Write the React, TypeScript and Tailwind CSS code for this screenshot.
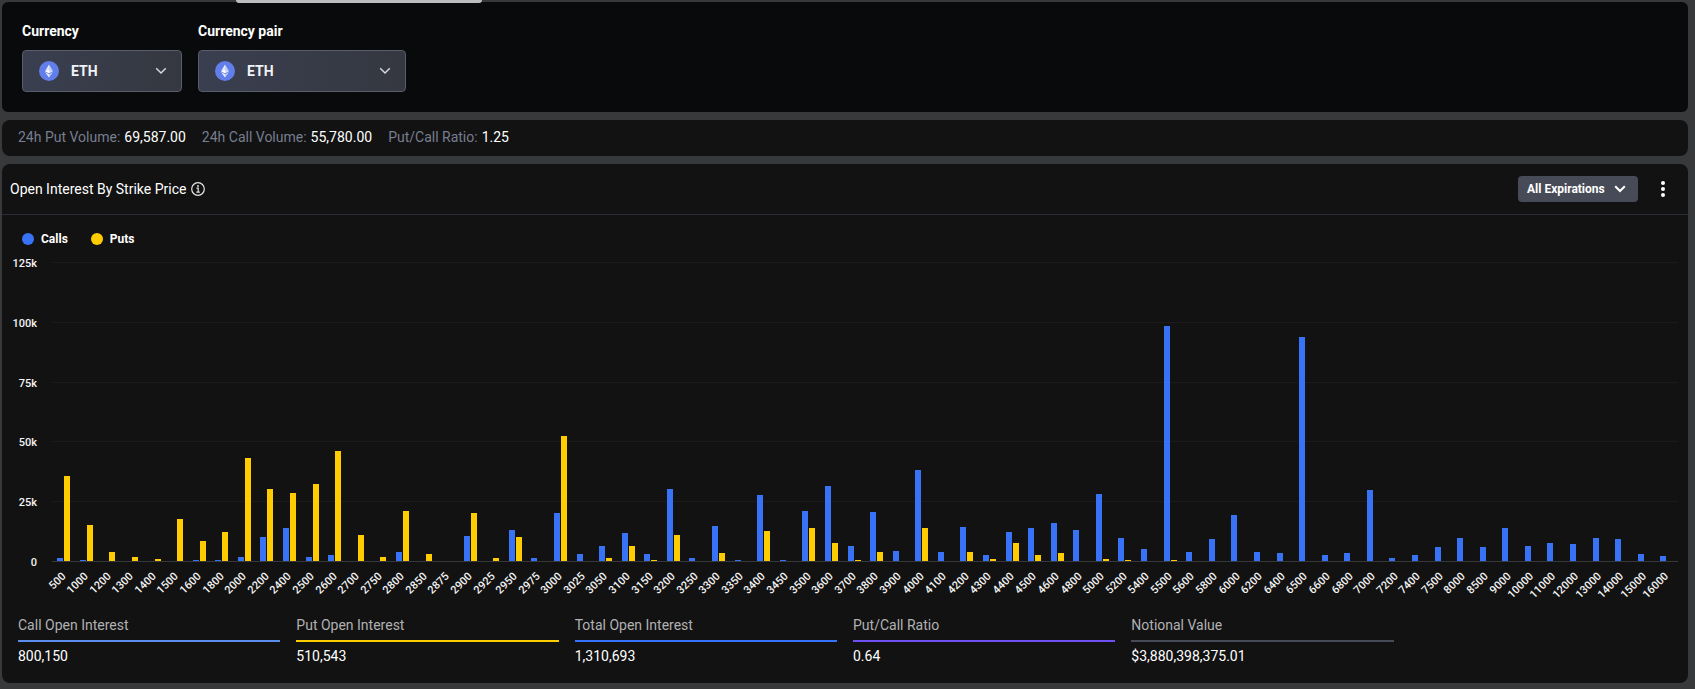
import React from "react";

type Strike = [strike: number, calls: number, puts: number];

const STRIKES: Strike[] = [
  [500, 1260, 35650], [1000, 420, 15100], [1200, 0, 3780], [1300, 0, 1680], [1400, 0, 840],
  [1500, 0, 17620], [1600, 420, 8390], [1800, 420, 12160], [2000, 1680, 43200], [2200, 10070, 30200],
  [2400, 13840, 28520], [2500, 1680, 32300], [2600, 2520, 46140], [2700, 0, 10910], [2750, 0, 1680],
  [2800, 3780, 20970], [2850, 0, 2940], [2875, 0, 0], [2900, 10490, 20130], [2925, 0, 1260],
  [2950, 13000, 10070], [2975, 1260, 0], [3000, 20130, 52300], [3025, 2940, 0], [3050, 6290, 1260],
  [3100, 11740, 6290], [3150, 2940, 420], [3200, 30200, 10910], [3250, 1260, 0], [3300, 14680, 3360],
  [3350, 420, 0], [3400, 27680, 12580], [3450, 420, 0], [3500, 20970, 13840], [3600, 31460, 7550],
  [3700, 6290, 420], [3800, 20550, 3780], [3900, 4190, 0], [4000, 38170, 13840], [4100, 3780, 0],
  [4200, 14260, 3780], [4300, 2520, 840], [4400, 12160, 7550], [4500, 13840, 2520], [4600, 15940, 3360],
  [4800, 13000, 0], [5000, 28100, 840], [5200, 9650, 420], [5400, 5030, 0], [5500, 98240, 420],
  [5600, 3780, 0], [5800, 9230, 0], [6000, 19300, 0], [6200, 3780, 0], [6400, 3360, 0],
  [6500, 93650, 0], [6600, 2520, 0], [6800, 3360, 0], [7000, 29780, 0], [7200, 1260, 0],
  [7400, 2520, 0], [7500, 5870, 0], [8000, 9650, 0], [8500, 5870, 0], [9000, 13840, 0],
  [10000, 6290, 0], [11000, 7550, 0], [12000, 7130, 0], [13000, 9650, 0], [14000, 9230, 0],
  [15000, 2940, 0], [16000, 2100, 0],
];

const MAX = 125000;
const TICKS = ["125k", "100k", "75k", "50k", "25k"];

const VOLUMES = [
  { label: "24h Put Volume:", value: "69,587.00" },
  { label: "24h Call Volume:", value: "55,780.00" },
  { label: "Put/Call Ratio:", value: "1.25" },
];

const TOTALS = [
  { label: "Call Open Interest", value: "800,150", line: "border-[#5b8def]" },
  { label: "Put Open Interest", value: "510,543", line: "border-[#ffcc00]" },
  { label: "Total Open Interest", value: "1,310,693", line: "border-[#3772ff]" },
  { label: "Put/Call Ratio", value: "0.64", line: "border-[#6f50f2]" },
  { label: "Notional Value", value: "$3,880,398,375.01", line: "border-[#474a57]" },
];

function EthIcon() {
  return (
    <svg viewBox="0 0 20 20" className="size-5 shrink-0" aria-hidden="true">
      <circle cx="10" cy="10" r="10" fill="#627eea" />
      <path d="M10 3.6 6 10.2 10 8.4z" fill="#fff" fillOpacity=".85" />
      <path d="M10 3.6 14 10.2 10 8.4z" fill="#fff" fillOpacity=".65" />
      <path d="M6 10.2 10 8.4v4.2z" fill="#fff" />
      <path d="M14 10.2 10 8.4v4.2z" fill="#fff" fillOpacity=".75" />
      <path d="M6 11 10 13.4v3z" fill="#fff" fillOpacity=".95" />
      <path d="M14 11 10 13.4v3z" fill="#fff" fillOpacity=".65" />
    </svg>
  );
}

function Chevron({ className }: { className: string }) {
  return (
    <svg viewBox="0 0 12 8" className={className} fill="none" stroke="currentColor" aria-hidden="true">
      <path d="M1.2 1.2 6 6l4.8-4.8" />
    </svg>
  );
}

function CoinPicker({ id, label, width }: { id: string; label: string; width: string }) {
  return (
    <div className={width}>
      <label htmlFor={id} className="block text-sm leading-5 font-bold text-white">
        {label}
      </label>
      <button
        id={id}
        type="button"
        className="mt-[9px] flex h-[42px] w-full items-center rounded border border-[#5a5d6b] bg-linear-to-r from-[#3a3f50] to-[#353840] pr-[14px] pl-4 text-[#f0f2f8]"
      >
        <EthIcon />
        <span className="ml-3 text-sm leading-5 font-bold">ETH</span>
        <Chevron className="ml-auto h-2 w-3 stroke-[1.5] text-[#d5d8e0]" />
      </button>
    </div>
  );
}

function Chart() {
  return (
    <div className="mr-[10px] flex">
      <div className="flex h-[299px] w-[35px] shrink-0 flex-col text-right text-[11px] leading-4 font-medium text-[#f4f4f4]">
        {TICKS.map((tick) => (
          <div key={tick} className="flex-1">
            <div className="-mt-1.5">{tick}</div>
          </div>
        ))}
        <div className="h-0">
          <div className="-mt-1.5">0</div>
        </div>
      </div>
      <div className="relative ml-[15px] min-w-0 flex-1">
        <div className="absolute inset-x-0 top-0 flex h-[299px] flex-col">
          {TICKS.map((tick) => (
            <div key={tick} className="flex-1 border-t border-[#1b1b1b]" />
          ))}
        </div>
        <div className="relative flex h-[300px] border-b border-[#37383a]">
          {STRIKES.map(([strike, calls, puts]) => (
            <div key={strike} className="flex min-w-0 flex-1 items-end justify-center gap-px pl-px">
              <div className="w-[6px] bg-[#3772f7]" style={{ height: `${(calls / MAX) * 100}%` }} />
              <div className="w-[6px] bg-[#ffcc00]" style={{ height: `${(puts / MAX) * 100}%` }} />
            </div>
          ))}
        </div>
        <div className="flex h-[45px] pt-[7px]">
          {STRIKES.map(([strike]) => (
            <div key={strike} className="flex min-w-0 flex-1 justify-end pr-4">
              <span className="origin-top-right -rotate-45 self-start text-[11px] leading-4 font-medium text-[#f4f4f4]">
                {strike}
              </span>
            </div>
          ))}
        </div>
      </div>
    </div>
  );
}

export default function App() {
  return (
    <div className="relative min-h-screen bg-[#38393a] pt-[2px] pr-[7px] pb-[6px] pl-[2px] font-[Roboto,sans-serif]">
      <div className="absolute top-0 left-[236px] h-[3px] w-[246px] rounded-b-lg bg-[#bcbdbf]" />
      <main className="flex flex-col gap-2">
        <section className="flex gap-4 rounded-md bg-[#090a0c] px-5 pt-[19px] pb-5">
          <CoinPicker id="currency" label="Currency" width="w-[160px]" />
          <CoinPicker id="pair" label="Currency pair" width="w-[208px]" />
        </section>

        <section className="flex gap-4 rounded-lg bg-[#121212] px-4 pt-[7px] pb-[9px] text-sm leading-5">
          {VOLUMES.map(({ label, value }) => (
            <p key={label} className="flex gap-1 text-[#777e90]">
              {label} <span className="text-white">{value}</span>
            </p>
          ))}
        </section>

        <section className="rounded-lg bg-[#121212]">
          <header className="flex h-[51px] items-center border-b border-[#2a2b33] pr-[15px] pl-2">
            <h1 className="text-sm leading-5 text-white">Open Interest By Strike Price</h1>
            <svg viewBox="0 0 14 14" className="ml-[5px] size-[14px]" fill="none" stroke="#e6e6e6" aria-hidden="true">
              <circle cx="7" cy="7" r="6.3" strokeWidth="1.2" />
              <path d="M5.5 6.2H7.2V10M5.4 10.2H8.8" strokeWidth="1.2" />
              <circle cx="7" cy="4" r=".9" fill="#e6e6e6" stroke="none" />
            </svg>
            <button
              type="button"
              className="ml-auto flex h-[26px] w-[120px] items-center justify-between rounded bg-[#474b57] pr-3 pl-[9px] text-xs leading-4 font-bold text-white"
            >
              All Expirations
              <Chevron className="h-2 w-3 stroke-2" />
            </button>
            <button type="button" aria-label="Chart menu" className="ml-[15px] flex h-6 w-5 items-center justify-center">
              <svg viewBox="0 0 4 16" className="h-4 w-1" fill="#fff" aria-hidden="true">
                <circle cx="2" cy="2" r="2" />
                <circle cx="2" cy="8" r="2" />
                <circle cx="2" cy="14" r="2" />
              </svg>
            </button>
          </header>

          <div className="flex gap-[23px] px-5 pt-4 pb-[15px] text-xs leading-4 font-bold text-white">
            <div className="flex items-center gap-[7px]">
              <span className="size-3 rounded-full bg-[#3772f7]" />
              Calls
            </div>
            <div className="flex items-center gap-[7px]">
              <span className="size-3 rounded-full bg-[#ffcc00]" />
              Puts
            </div>
          </div>

          <Chart />

          <dl className="grid grid-cols-6 gap-4 px-4 pt-2 pb-[17px] text-sm leading-5">
            {TOTALS.map(({ label, value, line }) => (
              <div key={label}>
                <dt className={`border-b-2 pb-[5px] text-[#b1b1b3] ${line}`}>{label}</dt>
                <dd className="pt-1 text-white">{value}</dd>
              </div>
            ))}
          </dl>
        </section>
      </main>
    </div>
  );
}
